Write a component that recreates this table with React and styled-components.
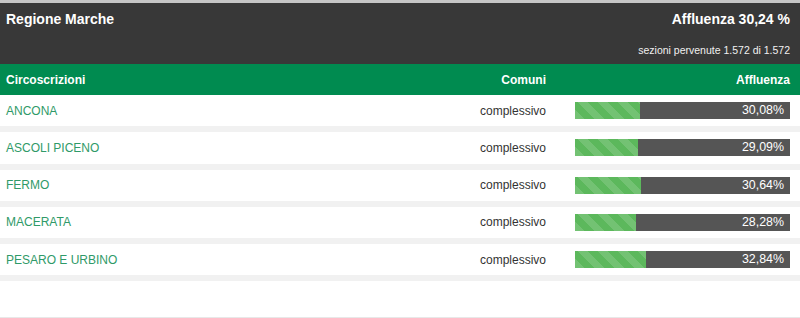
import styled, { createGlobalStyle } from "styled-components";

const GlobalStyle = createGlobalStyle`
  html, body {
    margin: 0;
    padding: 0;
    background: #ffffff;
  }
  body {
    font-family: "Liberation Sans", Arial, sans-serif;
  }
`;

const rows = [
  { name: "ANCONA", comuni: "complessivo", value: 30.08 },
  { name: "ASCOLI PICENO", comuni: "complessivo", value: 29.09 },
  { name: "FERMO", comuni: "complessivo", value: 30.64 },
  { name: "MACERATA", comuni: "complessivo", value: 28.28 },
  { name: "PESARO E URBINO", comuni: "complessivo", value: 32.84 },
];

const fmt = (v) => v.toFixed(2).replace(".", ",") + "%";

export default function App() {
  return (
    <>
      <GlobalStyle />
      <Panel>
        <Summary>
          <TitleRow>
            <Title>Regione Marche</Title>
            <Title>Affluenza 30,24 %</Title>
          </TitleRow>
          <SubRow>sezioni pervenute 1.572 di 1.572</SubRow>
        </Summary>
        <HeadRow>
          <span>Circoscrizioni</span>
          <RightCell>Comuni</RightCell>
          <RightCell>Affluenza</RightCell>
        </HeadRow>
        {rows.map((r) => (
          <Row key={r.name}>
            <Name>{r.name}</Name>
            <Comuni>{r.comuni}</Comuni>
            <Bar>
              <Fill style={{ width: `${r.value}%` }} />
              <BarLabel>{fmt(r.value)}</BarLabel>
            </Bar>
          </Row>
        ))}
      </Panel>
    </>
  );
}

const Panel = styled.div`
  height: 318px;
  box-sizing: border-box;
  border-top: 3px solid #c6c6c6;
  border-bottom: 1px solid #e8e8e8;
`;

const Summary = styled.div`
  background: #383838;
  height: 61px;
  padding: 0 10px 0 6px;
  color: #ffffff;
  display: flex;
  flex-direction: column;
`;

const TitleRow = styled.div`
  height: 32px;
  display: flex;
  justify-content: space-between;
  align-items: center;
`;

const Title = styled.div`
  font-size: 14px;
  font-weight: bold;
`;

const SubRow = styled.div`
  height: 29px;
  display: flex;
  justify-content: flex-end;
  align-items: center;
  font-size: 10.5px;
  color: #f0f0f0;
`;

const Grid = styled.div`
  display: grid;
  grid-template-columns: 1fr auto 215px;
  column-gap: 29px;
  align-items: center;
  padding: 0 10px 0 6px;
`;

const HeadRow = styled(Grid)`
  background: #008b50;
  height: 31px;
  color: #ffffff;
  font-size: 12px;
  font-weight: bold;
`;

const RightCell = styled.span`
  justify-self: end;
`;

const Row = styled(Grid)`
  height: 31.25px;
  border-bottom: 6px solid #f1f1f1;
  font-size: 12px;
`;

const Name = styled.span`
  color: #2f9a68;
`;

const Comuni = styled.span`
  justify-self: end;
  color: #333333;
`;

const Bar = styled.div`
  position: relative;
  height: 17px;
  background: #555555;
`;

const Fill = styled.div`
  height: 100%;
  background-color: #5cb85c;
  background-image: repeating-linear-gradient(
    45deg,
    rgba(255, 255, 255, 0.14) 0,
    rgba(255, 255, 255, 0.14) 7.07px,
    transparent 7.07px,
    transparent 14.14px
  );
`;

const BarLabel = styled.span`
  position: absolute;
  right: 6px;
  top: 0;
  line-height: 17px;
  font-size: 12.4px;
  color: #ffffff;
`;
